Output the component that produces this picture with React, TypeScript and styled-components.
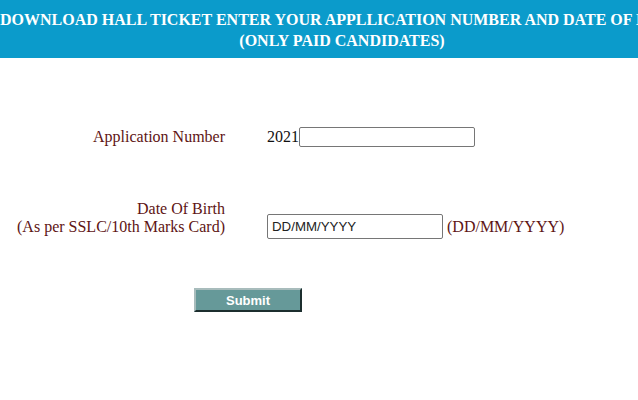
import styled, { createGlobalStyle } from "styled-components";

const GlobalStyle = createGlobalStyle`
  html, body {
    margin: 0;
    padding: 0;
    background: #ffffff;
    overflow: hidden;
  }
  body {
    font-family: "Liberation Serif", "Times New Roman", serif;
  }
`;

const Page = styled.div`
  width: 638px;
  height: 400px;
  overflow: hidden;
`;

const Banner = styled.header`
  width: 684px;
  height: 58px;
  box-sizing: border-box;
  padding-top: 9px;
  background: #0b9bcb;
  color: #ffffff;
  font-weight: bold;
  font-size: 16px;
  line-height: 21px;
  text-align: center;
`;

const BannerLine = styled.div`
  white-space: nowrap;
`;

const Form = styled.form`
  display: flex;
  flex-direction: column;
  padding-top: 69px;
`;

const Row = styled.div<{ $align: string; $height: number }>`
  display: grid;
  grid-template-columns: 225px 1fr;
  column-gap: 42px;
  align-items: ${(p) => p.$align};
  min-height: ${(p) => p.$height}px;
`;

const Label = styled.label<{ $pad?: number }>`
  color: #5e1414;
  font-size: 16px;
  line-height: 18px;
  text-align: right;
  padding-bottom: ${(p) => p.$pad ?? 0}px;
`;

const Field = styled.div`
  display: flex;
  align-items: center;
  font-size: 16px;
  color: #111;
`;

const Hint = styled.span`
  color: #5e1414;
  margin-left: 4px;
`;

const TextInput = styled.input<{ $h: number }>`
  box-sizing: border-box;
  width: 176px;
  height: ${(p) => p.$h}px;
  border: 1px solid #767676;
  border-radius: 2px;
  padding: 1px 4px;
  font-family: "Liberation Sans", Arial, sans-serif;
  font-size: 13.3px;
  color: #222;
  background: #fff;
  margin: 0;
`;

const Spacer = styled.div<{ $h: number }>`
  height: ${(p) => p.$h}px;
`;

const ButtonRow = styled.div`
  padding-left: 194px;
`;

const SubmitButton = styled.button`
  box-sizing: border-box;
  width: 108px;
  height: 24px;
  background: #669999;
  color: #ffffff;
  font-family: "Liberation Sans", Arial, sans-serif;
  font-weight: bold;
  font-size: 13px;
  border: 2px solid;
  border-color: #a8bcbc #1c2e2e #1c2e2e #a8bcbc;
  padding: 0;
  cursor: pointer;
`;

export default function App() {
  return (
    <Page>
      <GlobalStyle />
      <Banner>
        <BannerLine>
          DOWNLOAD HALL TICKET ENTER YOUR APPLLICATION NUMBER AND DATE OF BIRTH
        </BannerLine>
        <BannerLine>(ONLY PAID CANDIDATES)</BannerLine>
      </Banner>
      <Form onSubmit={(e) => e.preventDefault()}>
        <Row $align="center" $height={20}>
          <Label>Application Number</Label>
          <Field>
            2021
            <TextInput $h={20} type="text" />
          </Field>
        </Row>
        <Spacer $h={53} />
        <Row $align="end" $height={36}>
          <Label $pad={3}>
            Date Of Birth
            <br />
            (As per SSLC/10th Marks Card)
          </Label>
          <Field>
            <TextInput $h={25} type="text" defaultValue="DD/MM/YYYY" />
            <Hint>(DD/MM/YYYY)</Hint>
          </Field>
        </Row>
        <Spacer $h={49} />
        <ButtonRow>
          <SubmitButton type="submit">Submit</SubmitButton>
        </ButtonRow>
      </Form>
    </Page>
  );
}
